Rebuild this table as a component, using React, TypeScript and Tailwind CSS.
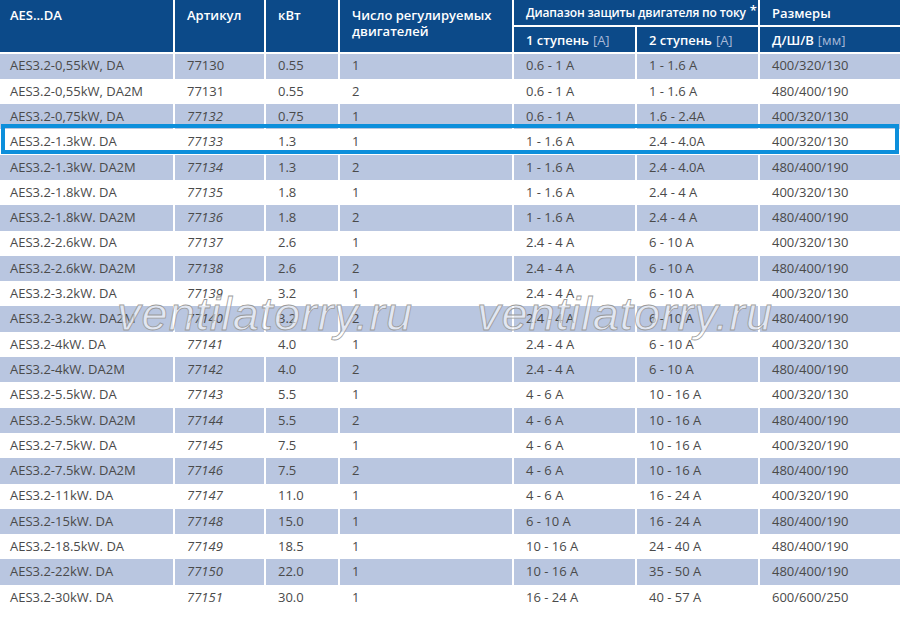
const rows: string[][] = [
  ["AES3.2-0,55kW, DA", "77130", "0.55", "1", "0.6 - 1 A", "1 - 1.6 A", "400/320/130"],
  ["AES3.2-0,55kW, DA2M", "77131", "0.55", "2", "0.6 - 1 A", "1 - 1.6 A", "480/400/190"],
  ["AES3.2-0,75kW, DA", "77132", "0.75", "1", "0.6 - 1 A", "1.6 - 2.4A", "400/320/130"],
  ["AES3.2-1.3kW. DA", "77133", "1.3", "1", "1 - 1.6 A", "2.4 - 4.0A", "400/320/130"],
  ["AES3.2-1.3kW. DA2M", "77134", "1.3", "2", "1 - 1.6 A", "2.4 - 4.0A", "480/400/190"],
  ["AES3.2-1.8kW. DA", "77135", "1.8", "1", "1 - 1.6 A", "2.4 - 4 A", "400/320/130"],
  ["AES3.2-1.8kW. DA2M", "77136", "1.8", "2", "1 - 1.6 A", "2.4 - 4 A", "480/400/190"],
  ["AES3.2-2.6kW. DA", "77137", "2.6", "1", "2.4 - 4 A", "6 - 10 A", "400/320/130"],
  ["AES3.2-2.6kW. DA2M", "77138", "2.6", "2", "2.4 - 4 A", "6 - 10 A", "480/400/190"],
  ["AES3.2-3.2kW. DA", "77139", "3.2", "1", "2.4 - 4 A", "6 - 10 A", "400/320/130"],
  ["AES3.2-3.2kW. DA2M", "77140", "3.2", "2", "2.4 - 4 A", "6 - 10 A", "480/400/190"],
  ["AES3.2-4kW. DA", "77141", "4.0", "1", "2.4 - 4 A", "6 - 10 A", "400/320/130"],
  ["AES3.2-4kW. DA2M", "77142", "4.0", "2", "2.4 - 4 A", "6 - 10 A", "480/400/190"],
  ["AES3.2-5.5kW. DA", "77143", "5.5", "1", "4 - 6 A", "10 - 16 A", "400/320/130"],
  ["AES3.2-5.5kW. DA2M", "77144", "5.5", "2", "4 - 6 A", "10 - 16 A", "480/400/190"],
  ["AES3.2-7.5kW. DA", "77145", "7.5", "1", "4 - 6 A", "10 - 16 A", "400/320/190"],
  ["AES3.2-7.5kW. DA2M", "77146", "7.5", "2", "4 - 6 A", "10 - 16 A", "480/400/190"],
  ["AES3.2-11kW. DA", "77147", "11.0", "1", "4 - 6 A", "16 - 24 A", "400/320/190"],
  ["AES3.2-15kW. DA", "77148", "15.0", "1", "6 - 10 A", "16 - 24 A", "480/400/190"],
  ["AES3.2-18.5kW. DA", "77149", "18.5", "1", "10 - 16 A", "24 - 40 A", "480/400/190"],
  ["AES3.2-22kW. DA", "77150", "22.0", "1", "10 - 16 A", "35 - 50 A", "480/400/190"],
  ["AES3.2-30kW. DA", "77151", "30.0", "1", "16 - 24 A", "40 - 57 A", "600/600/250"],
];

const cols = "grid grid-cols-[173px_89px_72px_172px_121px_121px_1fr] gap-x-[2px]";
const head = "bg-[#0c4a89] text-white font-semibold px-3";

function Watermark({ left }: { left: string }) {
  return (
    <div
      className={`pointer-events-none absolute top-[290px] ${left} text-[47px] italic leading-none tracking-[1px] text-[rgba(255,255,255,0.6)] [-webkit-text-stroke:0.8px_#9a9a9a] [font-family:'Liberation_Sans',sans-serif]`}
    >
      ventilatorry.ru
    </div>
  );
}

export default function App() {
  return (
    <div className="relative w-[900px] h-[618px] overflow-hidden bg-white text-[13px] text-[#4a4a4a] [font-family:'Open_Sans',sans-serif]">
      <div className={`${cols} grid-rows-[25px_25px] gap-y-[2px] leading-4`}>
        <div className={`${head} row-span-2 pt-[7px] pl-[10px]`}>AES...DA</div>
        <div className={`${head} row-span-2 pt-[7px]`}>Артикул</div>
        <div className={`${head} row-span-2 pt-[7px]`}>кВт</div>
        <div className={`${head} row-span-2 pt-[7px]`}>Число регулируемых двигателей</div>
        <div className={`${head} col-span-2 flex items-center whitespace-nowrap text-[12px] tracking-[-0.15px]`}>
          Диапазон защиты двигателя по току
          <span className="ml-[4px] -mt-[6px] text-[13px]">*</span>
        </div>
        <div className={`${head} flex items-center`}>Размеры</div>
        <div className={`${head} flex items-center whitespace-nowrap`}>
          1 ступень <span className="ml-1 font-normal text-[#a9b9d8]">[A]</span>
        </div>
        <div className={`${head} flex items-center whitespace-nowrap`}>
          2 ступень <span className="ml-1 font-normal text-[#a9b9d8]">[A]</span>
        </div>
        <div className={`${head} flex items-center whitespace-nowrap`}>
          Д/Ш/В <span className="ml-1 font-normal text-[#a9b9d8]">[мм]</span>
        </div>
      </div>

      <div className="mt-[1.5px]">
        {rows.map((r, i) => (
          <div key={r[1]} className={`${cols} relative h-[25.3px]`}>
            {r.map((c, j) => (
              <div
                key={j}
                className={`flex items-center ${j === 0 ? "pl-[10px]" : "pl-3"} ${
                  i % 2 === 0 ? "bg-[#b9c6e0]" : "bg-white"
                } ${j === 1 && i > 1 ? "italic" : ""}`}
              >
                {c}
              </div>
            ))}
            {i === 3 && (
              <div className="pointer-events-none absolute left-[1px] right-[1px] top-[-5px] bottom-[1px] border-4 border-[#0d8fdb]" />
            )}
          </div>
        ))}
      </div>

      <Watermark left="left-[117px]" />
      <Watermark left="left-[477px]" />
    </div>
  );
}
